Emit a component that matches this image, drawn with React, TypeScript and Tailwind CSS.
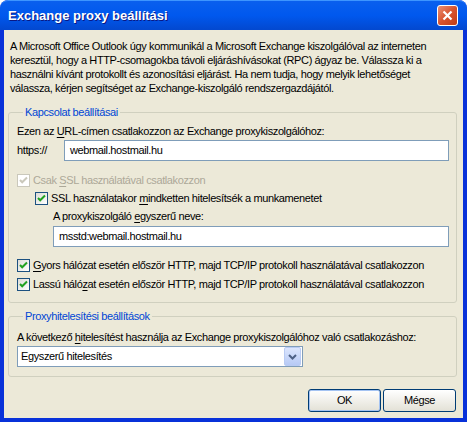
import React from "react";

const font = { fontFamily: '"Liberation Sans", Arial, sans-serif' };

function Check({ disabled = false }: { disabled?: boolean }) {
  return (
    <span
      className={
        "inline-flex items-center justify-center w-[13px] h-[13px] shrink-0 border " +
        (disabled
          ? "border-[#CAC8BB] bg-white"
          : "border-[#1C5180] bg-gradient-to-br from-[#DCDCD7] to-white")
      }
    >
      <svg width="9" height="9" viewBox="0 0 9 9">
        <path
          d="M1 4 L3.2 6.3 L8 1.5"
          fill="none"
          stroke={disabled ? "#CAC8BB" : "#21A121"}
          strokeWidth="2"
        />
      </svg>
    </span>
  );
}

function U({ children }: { children: React.ReactNode }) {
  return <span className="underline underline-offset-[2px]">{children}</span>;
}

export default function App() {
  return (
    <div
      className="w-[467px] h-[422px] flex flex-col rounded-t-[8px] bg-[#0831D9] overflow-hidden text-[11px] tracking-[-0.38px] text-black"
      style={font}
    >
      {/* title bar */}
      <div className="h-[30px] shrink-0 flex items-center justify-between pl-[8px] pr-[9px] bg-gradient-to-b from-[#0A5FEE] via-[#0058EE] to-[#0348CF] rounded-t-[8px] border-t border-[#3D95FF]">
        <span className="text-white font-bold text-[13px] tracking-[0px] [text-shadow:1px_1px_0_#0A1883]">
          Exchange proxy beállítási
        </span>
        <span className="w-[21px] h-[21px] rounded-[3px] border border-white bg-gradient-to-br from-[#E98F72] via-[#D8532E] to-[#C03C13] flex items-center justify-center">
          <svg width="11" height="11" viewBox="0 0 11 11">
            <path d="M1.5 1.5 L9.5 9.5 M9.5 1.5 L1.5 9.5" stroke="white" strokeWidth="2.2" />
          </svg>
        </span>
      </div>

      {/* body */}
      <div className="flex-1 mx-[4px] mb-[4px] bg-[#ECE9D8] flex flex-col pl-[4px] pr-[6px] pt-[9px]">
        <p className="leading-[14px] pl-[2px] whitespace-nowrap">
          A Microsoft Office Outlook úgy kommunikál a Microsoft Exchange kiszolgálóval az interneten
          <br />
          keresztül, hogy a HTTP-csomagokba távoli eljáráshívásokat (RPC) ágyaz be. Válassza ki a
          <br />
          használni kívánt protokollt és azonosítási eljárást. Ha nem tudja, hogy melyik lehetőséget
          <br />
          válassza, kérjen segítséget az Exchange-kiszolgáló rendszergazdájától.
        </p>

        <fieldset className="mt-[10px] border border-[#D0D0BF] rounded-[3px] pl-[8px] pr-[7px] pb-[11px]">
          <legend className="ml-[6px] px-[2px] text-[#0046D5] leading-[14px]">Kapcsolat beállításai</legend>
          <div className="mt-[5px] leading-[14px]">
            Ezen az <U>U</U>RL-címen csatlakozzon az Exchange proxykiszolgálóhoz:
          </div>
          <div className="mt-[2px] flex items-center">
            <span className="w-[47px] shrink-0">https://</span>
            <div className="flex-1 h-[21px] border border-[#7F9DB9] bg-white flex items-center pl-[5px]">
              webmail.hostmail.hu
            </div>
          </div>
          <div className="mt-[12px] flex items-center gap-[3px] text-[#ACA899] h-[14px]">
            <Check disabled />
            <span>
              Csak <U>S</U>SL használatával csatlakozzon
            </span>
          </div>
          <div className="mt-[4px] ml-[18px] flex items-center gap-[3px] h-[14px]">
            <Check />
            <span>
              SSL használatakor <U>m</U>indketten hitelesítsék a munkamenetet
            </span>
          </div>
          <div className="mt-[4px] ml-[36px] leading-[14px]">
            A proxykiszolgáló <U>e</U>gyszerű neve:
          </div>
          <div className="mt-[3px] ml-[36px] h-[21px] border border-[#7F9DB9] bg-white flex items-center pl-[5px]">
            msstd:webmail.hostmail.hu
          </div>
          <div className="mt-[11px] flex items-center gap-[3px] h-[14px] whitespace-nowrap">
            <Check />
            <span>
              <U>G</U>yors hálózat esetén először HTTP, majd TCP/IP protokoll használatával csatlakozzon
            </span>
          </div>
          <div className="mt-[5px] flex items-center gap-[3px] h-[14px] whitespace-nowrap">
            <Check />
            <span>
              Lassú háló<U>z</U>at esetén először HTTP, majd TCP/IP protokoll használatával csatlakozzon
            </span>
          </div>
        </fieldset>

        <fieldset className="mt-[6px] border border-[#D0D0BF] rounded-[3px] pl-[8px] pr-[7px] pb-[9px]">
          <legend className="ml-[6px] px-[2px] text-[#0046D5] leading-[14px]">Proxyhitelesítési beállítások</legend>
          <div className="mt-[7px] leading-[14px] whitespace-nowrap">
            A következő <U>h</U>itelesítést használja az Exchange proxykiszolgálóhoz való csatlakozáshoz:
          </div>
          <div className="mt-[2px] w-[286px] h-[21px] border border-[#7F9DB9] bg-white flex items-center">
            <span className="flex-1 pl-[3px]">Egyszerű hitelesítés</span>
            <span className="w-[17px] h-[19px] mr-[1px] rounded-[2px] border border-[#B9CBF3] bg-gradient-to-b from-[#DCE6FD] to-[#B7CAF5] flex items-center justify-center">
              <svg width="9" height="6" viewBox="0 0 9 6">
                <path d="M1 1 L4.5 4.5 L8 1" fill="none" stroke="#4D6185" strokeWidth="2" />
              </svg>
            </span>
          </div>
        </fieldset>

        <div className="mt-[12px] flex justify-end gap-[2px] pr-[1px]">
          <button className="w-[73px] h-[23px] rounded-[3px] border border-[#003C74] bg-gradient-to-b from-white to-[#E3E1D6] shadow-[inset_0_0_0_1px_#A4C3F2]">
            OK
          </button>
          <button className="w-[73px] h-[23px] rounded-[3px] border border-[#003C74] bg-gradient-to-b from-white to-[#E3E1D6]">
            Mégse
          </button>
        </div>
      </div>
    </div>
  );
}
